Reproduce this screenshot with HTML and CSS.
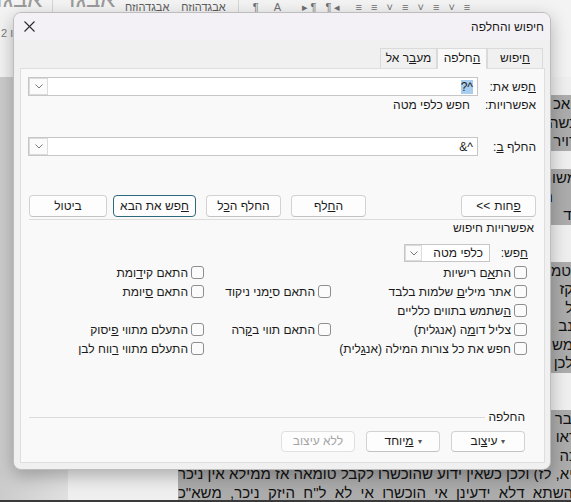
FILE: index.html
```html
<!DOCTYPE html>
<html lang="he">
<head>
    <meta charset="UTF-8">
    <meta name="viewport" content="width=device-width, initial-scale=1.0">
    <title>חיפוש והחלפה</title>
    <link rel="stylesheet" href="styles.css">
</head>
<body>
    <div class="app">
        <!-- Word ribbon behind the dialog -->
        <div class="ribbon">
            <div class="gallery">
                <span class="style-big">אבגד</span>
                <span class="gsep"></span>
                <span class="style-big">אבגד</span>
                <span class="style-small">אבגדהוזח</span>
                <span class="style-small">אבגדהוזח</span>
                <span class="gsep"></span>
                <span class="tools">¶ &nbsp;A &nbsp; ▸¶ ¶◂ &nbsp;≡ ≡ ˅ ≡ ˅ ≡ ˅ ≡</span>
            </div>
            <div class="ruler-num">2 ו</div>
        </div>

        <!-- document page -->
        <div class="workspace">
            <div class="gutter"></div>
            <div class="page" dir="rtl">
                <div class="line hl">'ואכ ושם כתב דאין לחוש לזה כלל כיון שאין ניכר</div>
                <div class="line hl">כשהוא מחובר לקרקע ואין בו משום היזק ניכר כלל</div>
                <div class="line hl">רויר הדברים שבארנו לעיל בשם הראשונים ז"ל</div>
                <div class="line"></div>
                <div class="line hl">משום דכל שאינו ניכר אינו נחשב היזק כלל</div>
                <div class="line hl">נ םשם נתבאר דהיזק שאינו ניכר לא שמיה היזק</div>
                <div class="line hl">"ד ובגיטין דף נ"ג ע"א מבואר בזה היטב</div>
                <div class="line"></div>
                <div class="line"></div>
                <div class="line hl">נטמ ועוד דהא דתנן המטמא והמדמע והמנסך</div>
                <div class="line hl">וקז הזיק ופטור משום דהיזק שאינו ניכר הוא</div>
                <div class="line hl">ול ר ואם תאמר אם כן אמאי חייב במזיק</div>
                <div class="line hl">ונב ונראה דהכא מיירי בשעה שהוכשרו לקבל</div>
                <div class="line hl">ומש ממילא ליכא היזק ניכר כלל ושפיר פטור</div>
                <div class="line hl">ולכן לא חשיב מזיק אלא מדרבנן בלבד</div>
                <div class="line">נ םש והדברים ברורים ואין צריך להאריך</div>
                <div class="line"></div>
                <div class="line hl">"בר ובזה מבואר היטב דברי הגמרא שם</div>
                <div class="line hl">ראו מבואר בדברי התוספות בכמה מקומות</div>
                <div class="line hl">כה הכל תלוי אם ידוע שהוכשרו או לא</div>
                <div class="line hl">ויא, לז) ולכן כשאין ידוע שהוכשרו לקבל טומאה אז ממילא אין ניכר חלק</div>
                <div class="line hl">והשתא דלא ידעינן אי הוכשרו אי לא ל"ח היזק ניכר, משא"כ בכלאים</div>
            </div>
        </div>

        <!-- Find and Replace dialog -->
        <div class="dialog" dir="rtl">
            <div class="titlebar">
                <span class="title">חיפוש והחלפה</span>
                <svg class="close" width="11" height="11" viewBox="0 0 11 11">
                    <path d="M0.5 0.5 L10.5 10.5 M10.5 0.5 L0.5 10.5" stroke="#2b2b2b" stroke-width="1.1" fill="none"/>
                </svg>
            </div>
            <div class="dialog-body">
                <div class="tabs">
                    <span class="tab tab-find"><u>ח</u>יפוש</span>
                    <span class="tab tab-replace active"><u>ה</u>חלפה</span>
                    <span class="tab tab-goto">מע<u>ב</u>ר אל</span>
                </div>
                <div class="panel">
                    <div class="field-row">
                        <span class="field-label"><u>ח</u>פש את:</span>
                        <div class="combo">
                            <span class="combo-text"><span class="sel">^?</span></span>
                            <span class="combo-arrow"><svg width="8" height="5" viewBox="0 0 8 5"><path d="M0.5 0.5 L4 4 L7.5 0.5" stroke="#777" fill="none"/></svg></span>
                        </div>
                    </div>
                    <div class="opts-row">
                        <span class="field-label">אפשרויות:</span>
                        <span class="opts-value">חפש כלפי מטה</span>
                    </div>
                    <div class="field-row replace-row">
                        <span class="field-label">החלף <u>ב</u>:</span>
                        <div class="combo">
                            <span class="combo-text">^&amp;</span>
                            <span class="combo-arrow"><svg width="8" height="5" viewBox="0 0 8 5"><path d="M0.5 0.5 L4 4 L7.5 0.5" stroke="#777" fill="none"/></svg></span>
                        </div>
                    </div>

                    <div class="button-row">
                        <span class="btn btn-split"><span><u>פ</u>חות</span><span class="ltr">&lt;&lt;</span></span>
                        <div class="button-group">
                            <span class="btn">ה<u>ח</u>לף</span>
                            <span class="btn">החלף ה<u>כ</u>ל</span>
                            <span class="btn btn-default"><u>ח</u>פש את הבא</span>
                            <span class="btn btn-cancel">ביטול</span>
                        </div>
                    </div>

                    <div class="sep-top"></div>
                    <div class="group-label">אפשרויות חיפוש</div>

                    <div class="search-row">
                        <span class="search-label"><u>ח</u>פש:</span>
                        <div class="select">
                            <span class="select-text">כלפי מטה</span>
                            <span class="select-arrow"><svg width="8" height="5" viewBox="0 0 8 5"><path d="M0.5 0.5 L4 4 L7.5 0.5" stroke="#777" fill="none"/></svg></span>
                        </div>
                    </div>

                    <div class="checks">
                        <label class="check"><span class="box"></span><span>הת<u>א</u>ם רישיות</span></label>
                        <span></span>
                        <label class="check"><span class="box"></span><span>התאם קי<u>ד</u>ומת</span></label>

                        <label class="check"><span class="box"></span><span>אתר מילי<u>ם</u> שלמות בלבד</span></label>
                        <label class="check"><span class="box"></span><span>התאם ס<u>י</u>מני ניקוד</span></label>
                        <label class="check"><span class="box"></span><span>התאם <u>ס</u>יומת</span></label>

                        <label class="check"><span class="box"></span><span><u>ה</u>שתמש בתווים כלליים</span></label>
                        <span></span>
                        <span></span>

                        <label class="check"><span class="box"></span><span>צליל דו<u>מ</u>ה (אנגלית)</span></label>
                        <label class="check"><span class="box"></span><span>התאם תווי ב<u>ק</u>רה</span></label>
                        <label class="check"><span class="box"></span><span>התעלם מתווי <u>פ</u>יסוק</span></label>

                        <label class="check"><span class="box"></span><span>חפש את כל צורות המילה (אנ<u>ג</u>לית)</span></label>
                        <span></span>
                        <label class="check"><span class="box"></span><span>התעלם מתווי <u>ר</u>ווח לבן</span></label>
                    </div>

                    <div class="replace-group">
                        <span>החלפה</span>
                        <span class="group-line"></span>
                    </div>
                    <div class="bottom-buttons">
                        <span class="btn btn-split"><span class="caret">▾</span><span>עי<u>צ</u>וב</span></span>
                        <span class="btn btn-split"><span class="caret">▾</span><span><u>מ</u>יוחד</span></span>
                        <span class="btn disabled">ללא עיצוב</span>
                    </div>
                </div>
            </div>
        </div>
    </div>
</body>
</html>
```

FILE: styles.css
```css
* {
    box-sizing: border-box;
}
body {
    margin: 0;
    font-family: "Liberation Sans", Arial, sans-serif;
    font-size: 12px;
    color: #1b1b1b;
}
.app {
    position: relative;
    width: 571px;
    height: 502px;
    overflow: hidden;
    background: #e6e6e6;
    border-bottom: 2px solid #3a3a3a;
}

/* Ribbon */
.ribbon {
    height: 77px;
    background: #f3f3f3;
}
.gallery {
    display: flex;
    align-items: flex-start;
    height: 13px;
    overflow: hidden;
    white-space: nowrap;
    direction: ltr;
}
.style-big {
    font-size: 24px;
    color: #9b9b9b;
    margin-top: -15px;
    width: 60px;
    text-align: center;
}
.style-big:first-child {
    margin-left: -14px;
}
.style-small {
    font-size: 11px;
    color: #5c5c5c;
    margin: 1px 6px 0;
}
.gsep {
    width: 1px;
    height: 13px;
    background: #d6d6d6;
    margin: 0 6px;
}
.tools {
    font-size: 11px;
    color: #6e6e6e;
    letter-spacing: 3px;
    margin-left: 8px;
    margin-top: 1px;
}
.ruler-num {
    direction: ltr;
    font-size: 11px;
    color: #7a7a7a;
    margin-top: 14px;
    padding-left: 1px;
}

/* Document */
.workspace {
    display: flex;
    height: 423px;
}
.gutter {
    width: 68px;
    background: linear-gradient(to right, #cbcbcb, #e0e0e0);
}
.page {
    flex: 1;
    margin-right: -6px;
    padding: 18px 0 0 110px;
    background: #efefef;
}
.line {
    height: 18.5px;
    line-height: 18.5px;
    font-size: 15px;
    color: #111;
    overflow: hidden;
    text-align: justify;
    text-align-last: justify;
}
.line.hl {
    background: #acacac;
}

/* Dialog */
.dialog {
    position: absolute;
    left: 13px;
    top: 12px;
    width: 538px;
    height: 458px;
    display: flex;
    flex-direction: column;
    background: #f0f0f0;
    border: 1px solid #bdbdbd;
    border-radius: 8px;
    box-shadow: 0 6px 18px rgba(0, 0, 0, 0.28);
    overflow: hidden;
}
.titlebar {
    height: 27px;
    display: flex;
    align-items: center;
    justify-content: space-between;
    padding: 0 6px 0 10px;
    background: #f3f0f6;
}
.title {
    font-size: 12px;
}
.dialog-body {
    flex: 1;
    display: flex;
    flex-direction: column;
    padding: 8px 5px 6px 6px;
}
.tabs {
    display: flex;
    height: 20px;
    padding-right: 2px;
}
.tab {
    height: 20px;
    line-height: 19px;
    text-align: center;
    border: 1px solid #dadada;
    border-bottom: none;
    background: #f0f0f0;
}
.tab-find {
    width: 56px;
}
.tab-replace {
    width: 50px;
}
.tab-goto {
    width: 57px;
}
.tab.active {
    background: #f9f9f9;
    height: 21px;
    position: relative;
    z-index: 1;
}
.panel {
    flex: 1;
    display: flex;
    flex-direction: column;
    padding: 8px 8px 10px 7px;
    background: #f9f9f9;
    border: 1px solid #dedede;
}
.field-row {
    display: flex;
    align-items: center;
    height: 19px;
}
.replace-row {
    margin-top: 25px;
}
.field-label {
    width: 58px;
    flex: none;
}
.combo {
    flex: 1;
    height: 19px;
    display: flex;
    align-items: center;
    background: #fff;
    border: 1px solid #c6c6c6;
}
.combo-text {
    flex: 1;
    padding-right: 4px;
}
.sel {
    background: #a9cdef;
}
.combo-arrow,
.select-arrow {
    width: 19px;
    height: 17px;
    display: flex;
    align-items: center;
    justify-content: center;
    border: 1px solid #dcdcdc;
    background: #fbfbfb;
}
.opts-row {
    display: flex;
    height: 14px;
    line-height: 14px;
    margin-top: 2px;
}
.opts-value {
    padding-right: 8px;
}

.button-row {
    display: flex;
    justify-content: space-between;
    margin-top: 39px;
}
.button-group {
    display: flex;
    gap: 10px;
    padding-left: 1px;
}
.btn {
    width: 75px;
    height: 22px;
    line-height: 20px;
    text-align: center;
    background: #fdfdfd;
    border: 1px solid #d2d2d2;
    border-bottom-color: #c2c2c2;
    border-radius: 4px;
}
.btn-split {
    display: flex;
    justify-content: center;
    gap: 4px;
}
.btn-default {
    width: 83px;
    border-color: #2f6a7c;
}
.btn-cancel {
    width: 78px;
    margin-right: -4px;
}
.btn.disabled {
    color: #a5a5a5;
    border-color: #e0e0e0;
}
.ltr {
    direction: ltr;
    unicode-bidi: isolate;
}
.caret {
    font-size: 8px;
    color: #555;
}

.sep-top {
    height: 1px;
    margin: 2px 4px 0 1px;
    background: #dcdcdc;
}
.group-label {
    height: 14px;
    line-height: 14px;
    margin-top: 1px;
    padding-right: 2px;
}
.search-row {
    display: flex;
    align-items: center;
    height: 18px;
    margin-top: 9px;
    padding-right: 8px;
}
.search-label {
    width: 38px;
}
.select {
    width: 86px;
    height: 18px;
    display: flex;
    align-items: center;
    background: #fff;
    border: 1px solid #c6c6c6;
}
.select-text {
    flex: 1;
    padding-right: 6px;
}
.select-arrow {
    width: 17px;
    height: 16px;
}

.checks {
    display: grid;
    grid-template-columns: 196px 127px 1fr;
    grid-auto-rows: 19px;
    margin-top: 1px;
    padding-right: 9px;
}
.check {
    display: flex;
    align-items: center;
    gap: 3px;
    white-space: nowrap;
}
.box {
    width: 13px;
    height: 13px;
    flex: none;
    background: #fbfbfb;
    border: 1px solid #8e8e8e;
    border-radius: 3px;
}

.replace-group {
    display: flex;
    align-items: center;
    gap: 3px;
    height: 14px;
    margin-top: auto;
    padding-right: 11px;
}
.group-line {
    flex: 1;
    height: 1px;
    margin-left: 1px;
    background: #dcdcdc;
}
.bottom-buttons {
    display: flex;
    gap: 11px;
    margin-top: 7px;
    padding-right: 11px;
}
.bottom-buttons .btn {
    width: 74px;
    height: 21px;
    line-height: 19px;
}
```
